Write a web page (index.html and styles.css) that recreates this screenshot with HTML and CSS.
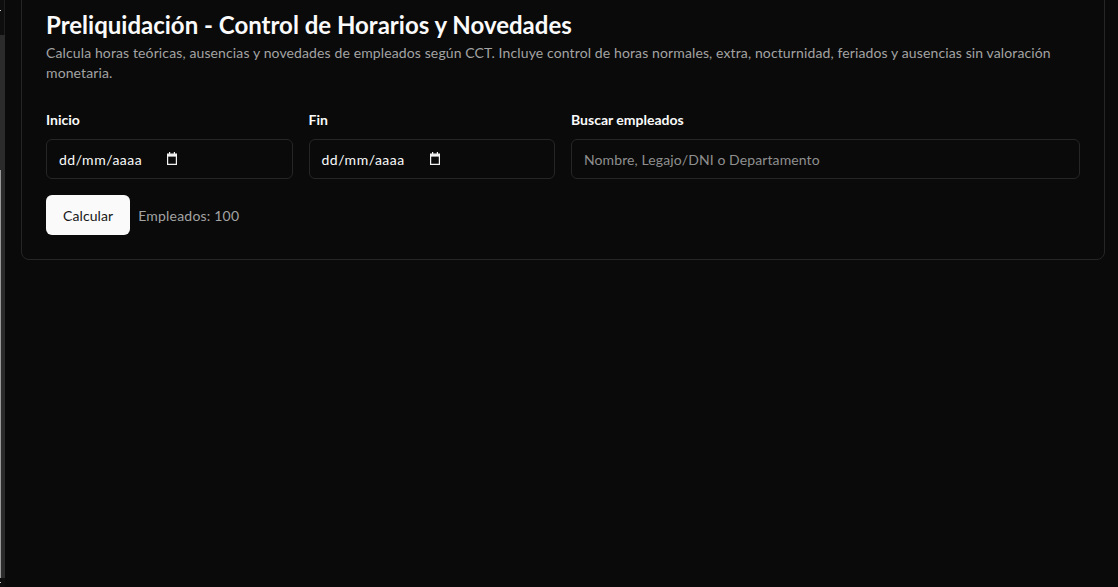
FILE: index.html
```html
<!DOCTYPE html>
<html lang="es">
<head>
<meta charset="utf-8">
<title>Preliquidación</title>
<link rel="stylesheet" href="styles.css">
</head>
<body>
<div class="app">
  <aside class="rail">
    <div class="rail-top"><span class="rail-dot"></span></div>
    <div class="rail-mid"></div>
    <div class="rail-track"></div>
    <div class="rail-bottom"><span class="rail-dot"></span></div>
  </aside>
  <main class="main">
    <section class="card">
      <h1 class="title">Preliquidación - Control de Horarios y Novedades</h1>
      <p class="subtitle">Calcula horas teóricas, ausencias y novedades de empleados según CCT. Incluye control de horas normales, extra, nocturnidad, feriados y ausencias sin valoración monetaria.</p>
      <div class="fields">
        <div class="field">
          <label class="label">Inicio</label>
          <div class="input date">
            <span class="date-text">dd/mm/aaaa</span>
            <svg class="cal" width="10" height="13" viewBox="0 0 10 13"><rect x="2" y="0" width="1.2" height="2.5" fill="#f2f2f2"/><rect x="6.8" y="0" width="1.2" height="2.5" fill="#f2f2f2"/><path d="M0.6 2.2h8.8v10.2H0.6z" fill="none" stroke="#f2f2f2" stroke-width="1.2"/><rect x="0.6" y="2.2" width="8.8" height="2.4" fill="#f2f2f2"/></svg>
          </div>
        </div>
        <div class="field">
          <label class="label">Fin</label>
          <div class="input date">
            <span class="date-text">dd/mm/aaaa</span>
            <svg class="cal" width="10" height="13" viewBox="0 0 10 13"><rect x="2" y="0" width="1.2" height="2.5" fill="#f2f2f2"/><rect x="6.8" y="0" width="1.2" height="2.5" fill="#f2f2f2"/><path d="M0.6 2.2h8.8v10.2H0.6z" fill="none" stroke="#f2f2f2" stroke-width="1.2"/><rect x="0.6" y="2.2" width="8.8" height="2.4" fill="#f2f2f2"/></svg>
          </div>
        </div>
        <div class="field wide">
          <label class="label">Buscar empleados</label>
          <input class="input search" type="text" placeholder="Nombre, Legajo/DNI o Departamento">
        </div>
      </div>
      <div class="actions">
        <button class="btn" type="button">Calcular</button>
        <span class="count">Empleados: 100</span>
      </div>
    </section>
  </main>
</div>
</body>
</html>
```
FILE: styles.css
```css
* { box-sizing: border-box; }
html, body { margin: 0; padding: 0; height: 100%; }
body {
  background: #0a0a0a;
  color: #fafafa;
  font-family: Lato, "Noto Sans", sans-serif;
  overflow: hidden;
}
.app { display: flex; height: 100%; }
.rail {
  width: 5px;
  flex: none;
  display: flex;
  flex-direction: column;
  background: #0d0d0d;
}
.rail-top { height: 35px; position: relative; background: #0e0e0e; border-right: 1px solid #1e1e1e; }
.rail-mid { height: 135px; background: #2b2b2b; }
.rail-track { flex: 1; background: #2b2b2b; border-left: 1px solid #9a9a9a; }
.rail-bottom { height: 9px; position: relative; background: #0e0e0e; }
.rail-dot { position: absolute; left: 0; top: 10px; width: 1px; height: 1px; background: #cfcfcf; }
.rail-bottom .rail-dot { top: 4px; }
.main { flex: 1; padding: 0 13px 0 16px; }
.card {
  margin-top: -16px;
  border: 1px solid #262626;
  border-radius: 8px;
  background: #0a0a0a;
  padding: 24px;
}
.title {
  margin: 0;
  font-size: 24px;
  line-height: 32px;
  font-weight: 700;
  letter-spacing: 0;
}
.subtitle {
  margin: 2px 0 0;
  font-size: 14px;
  line-height: 20px;
  color: #a3a3a3;
  letter-spacing: 0.12px;
}
.fields {
  margin-top: 27px;
  display: grid;
  grid-template-columns: repeat(4, 1fr);
  column-gap: 16px;
}
.field { display: flex; flex-direction: column; gap: 9px; }
.field.wide { grid-column: span 2; }
.label { font-size: 14px; line-height: 20px; font-weight: 700; }
.input {
  height: 40px;
  border: 1px solid #262626;
  border-radius: 6px;
  background: #0a0a0a;
  padding: 0 12px;
  font-family: inherit;
  font-size: 14px;
  color: #fafafa;
  outline: none;
}
.search { letter-spacing: 0.1px; }
.input::placeholder { color: #8f8f8f; }
.date { display: flex; align-items: center; gap: 25px; }
.date-text { font-size: 14px; letter-spacing: 0.5px; }
.cal { display: block; margin-top: -1px; }
.actions {
  margin-top: 16px;
  display: flex;
  align-items: center;
  gap: 8px;
}
.btn {
  height: 40px;
  padding: 0 17px;
  border: none;
  border-radius: 6px;
  background: #fafafa;
  color: #171717;
  font-family: inherit;
  font-size: 14px;
  font-weight: 400;
  letter-spacing: 0.1px;
}
.count { font-size: 14px; color: #a3a3a3; letter-spacing: 0.2px; }
```
